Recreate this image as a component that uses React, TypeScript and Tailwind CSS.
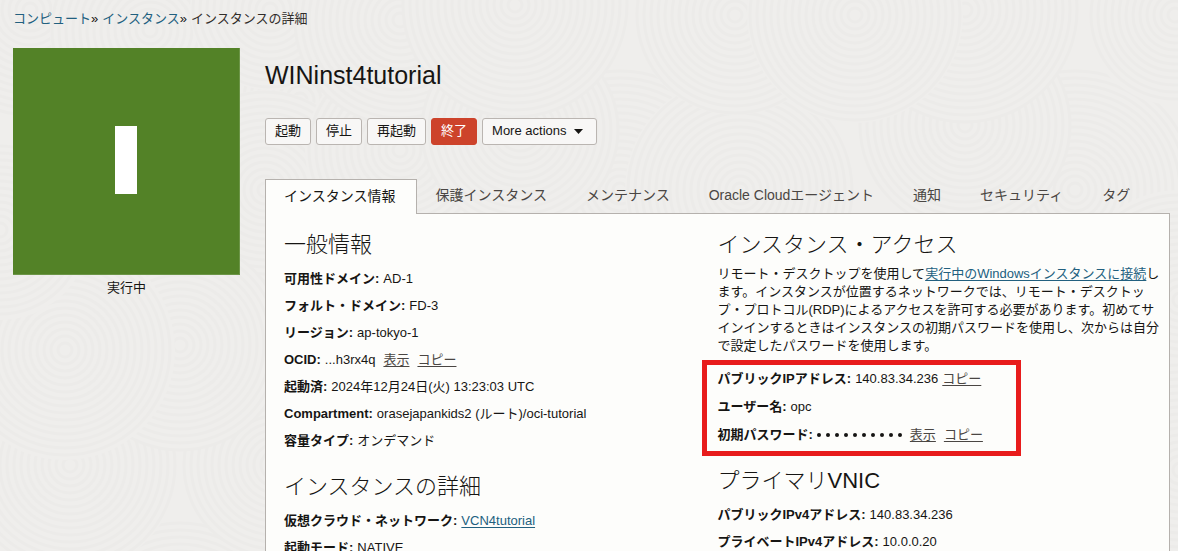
import React from "react";

type Disc = { x: number; y: number; r: number };

const DISCS: Disc[] = [
  { x: 30, y: 10, r: 110 }, { x: 150, y: 30, r: 100 }, { x: 300, y: 100, r: 110 },
  { x: 265, y: 190, r: 100 }, { x: 400, y: 150, r: 95 }, { x: 270, y: 10, r: 80 },
  { x: 400, y: 20, r: 105 }, { x: 620, y: 190, r: 125 }, { x: 740, y: 190, r: 115 },
  { x: 735, y: 15, r: 100 }, { x: 520, y: 130, r: 98 }, { x: 515, y: 5, r: 112 },
  { x: 1075, y: 190, r: 120 }, { x: 1175, y: 15, r: 90 },
  { x: 965, y: 125, r: 105 }, { x: 965, y: 10, r: 112 }, { x: 855, y: 15, r: 108 },
  { x: 1180, y: 300, r: 110 }, { x: 1180, y: 470, r: 110 },
  { x: 180, y: 635, r: 115 }, { x: 275, y: 465, r: 92 }, { x: 70, y: 465, r: 108 },
  { x: 180, y: 345, r: 105 }, { x: 65, y: 350, r: 110 }, { x: 0, y: 230, r: 90 },
];

function Backdrop() {
  return (
    <svg className="pointer-events-none absolute inset-0 h-full w-full" aria-hidden="true">
      {DISCS.map((d, i) => (
        <g key={i}>
          <circle cx={d.x} cy={d.y} r={d.r} fill="#efeeec" />
          {Array.from({ length: Math.floor(d.r / 7) }, (_, k) => (
            <circle key={k} cx={d.x} cy={d.y} r={(k + 1) * 7} fill="none" stroke="#ecebe9" strokeWidth="3" />
          ))}
        </g>
      ))}
    </svg>
  );
}

function ActionButton({ children, danger = false }: { children: React.ReactNode; danger?: boolean }) {
  return (
    <button
      type="button"
      className={
        danger
          ? "flex h-[27px] items-center rounded-[3px] border border-[#cd432b] bg-[#cd432b] px-[9px] pb-[2px] text-white"
          : "flex h-[27px] items-center rounded-[3px] border border-[#bab5b1] bg-[#f8f7f6] px-[9px] pb-[2px] text-[#161513]"
      }
    >
      {children}
    </button>
  );
}

function Row({ label, children }: { label: string; children: React.ReactNode }) {
  return (
    <div className="flex gap-1 whitespace-nowrap">
      <dt className="font-bold">{label}:</dt>
      <dd className="flex">{children}</dd>
    </div>
  );
}

function TextLink({ children, className = "" }: { children: React.ReactNode; className?: string }) {
  return (
    <a href="#" className={"text-[#4a4643] underline underline-offset-2 " + className}>
      {children}
    </a>
  );
}

function Heading({ children }: { children: React.ReactNode }) {
  return <h2 className="text-[22px] leading-8 font-light">{children}</h2>;
}

const TABS = ["インスタンス情報", "保護インスタンス", "メンテナンス", "Oracle Cloudエージェント", "通知", "セキュリティ", "タグ"];

export default function App() {
  return (
    <div className="relative h-screen overflow-hidden bg-[#efeeec] font-['Liberation_Sans','Noto_Sans_CJK_JP',sans-serif] text-[13px] text-[#161513]">
      <Backdrop />
      <div className="relative pr-2 pl-[13px]">
        <nav className="flex h-12 items-center gap-1 pb-[10px]" aria-label="パンくず">
          <span><a href="#" className="text-[#22607f]">コンピュート</a>»</span>
          <span><a href="#" className="text-[#22607f]">インスタンス</a>»</span>
          <span className="text-[#312d2a]">インスタンスの詳細</span>
        </nav>

        <div className="flex items-start gap-[25px]">
          <aside className="w-[227px] shrink-0 text-center">
            <div className="flex aspect-square items-center justify-center border-r border-b border-[#6c9547] bg-[#538227] pb-[2px]">
              <div className="h-[68px] w-[22px] bg-white" />
            </div>
            <p className="pt-1 leading-[18px]">実行中</p>
          </aside>

          <main className="min-w-0 flex-1">
            <h1 className="pt-3 text-[25px] leading-[30px]">WINinst4tutorial</h1>
            <div className="mt-7 flex gap-[5px]">
              <ActionButton>起動</ActionButton>
              <ActionButton>停止</ActionButton>
              <ActionButton>再起動</ActionButton>
              <ActionButton danger>終了</ActionButton>
              <ActionButton>
                More actions
                <svg className="mt-[2px] mr-1 ml-2 h-[5px] w-[9px]" viewBox="0 0 9 5" aria-hidden="true">
                  <path d="M0 0h9L4.500 5z" fill="#161513" />
                </svg>
              </ActionButton>
            </div>

            <div role="tablist" className="relative z-10 mt-[34px] -mb-px flex gap-[3px] text-sm whitespace-nowrap">
              {TABS.map((tab, i) => (
                <button
                  key={tab}
                  type="button"
                  role="tab"
                  aria-selected={i === 0}
                  className={
                    i === 0
                      ? "-mr-[3px] h-[35px] border border-b-0 border-[#b5b1ad] bg-[#fdfdfb] pr-[21px] pb-[2px] pl-[18px]"
                      : "h-[35px] px-[18px] pb-1 text-[#4a4643]"
                  }
                >
                  {tab}
                </button>
              ))}
            </div>

            <section className="grid grid-cols-2 border border-[#b5b1ad] bg-[#fdfdfb] px-[18px] pt-[15px]">
              <div>
                <Heading>一般情報</Heading>
                <dl className="mt-1 leading-[27px]">
                  <Row label="可用性ドメイン">AD-1</Row>
                  <Row label="フォルト・ドメイン">FD-3</Row>
                  <Row label="リージョン">ap-tokyo-1</Row>
                  <Row label="OCID">
                    ...h3rx4q
                    <TextLink className="ml-2">表示</TextLink>
                    <TextLink className="ml-2">コピー</TextLink>
                  </Row>
                  <Row label="起動済">2024年12月24日(火) 13:23:03 UTC</Row>
                  <Row label="Compartment">orasejapankids2 (ルート)/oci-tutorial</Row>
                  <Row label="容量タイプ">オンデマンド</Row>
                </dl>
                <div className="mt-[17px]">
                  <Heading>インスタンスの詳細</Heading>
                  <dl className="mt-1 leading-[27px]">
                    <Row label="仮想クラウド・ネットワーク">
                      <a href="#" className="text-[#22607f] underline underline-offset-2">VCN4tutorial</a>
                    </Row>
                    <Row label="起動モード">NATIVE</Row>
                  </dl>
                </div>
              </div>

              <div>
                <Heading>インスタンス・アクセス</Heading>
                <p className="mt-1 leading-[18px] whitespace-nowrap">
                  リモート・デスクトップを使用して
                  <a href="#" className="text-[#22607f] underline underline-offset-2">実行中のWindowsインスタンスに接続</a>し<br />
                  ます。インスタンスが位置するネットワークでは、リモート・デスクトッ<br />
                  プ・プロトコル(RDP)によるアクセスを許可する必要があります。初めてサ<br />
                  インインするときはインスタンスの初期パスワードを使用し、次からは自分<br />
                  で設定したパスワードを使用します。
                </p>
                <dl className="mt-[5px] -ml-4 w-[319px] border-[5px] border-[#e81c1c] pb-[2px] pl-[11px] leading-[28px]">
                  <Row label="パブリックIPアドレス">
                    140.83.34.236
                    <TextLink className="ml-1">コピー</TextLink>
                  </Row>
                  <Row label="ユーザー名">opc</Row>
                  <Row label="初期パスワード">
                    <span className="flex items-center gap-[5px]" role="img" aria-label="非表示のパスワード">
                      {Array.from({ length: 10 }, (_, i) => (
                        <span key={i} className="size-1 rounded-full bg-[#161513]" />
                      ))}
                    </span>
                    <TextLink className="ml-2">表示</TextLink>
                    <TextLink className="ml-2">コピー</TextLink>
                  </Row>
                </dl>
                <div className="mt-[9px]">
                  <Heading>プライマリVNIC</Heading>
                  <dl className="mt-1 leading-[27px]">
                    <Row label="パブリックIPv4アドレス">140.83.34.236</Row>
                    <Row label="プライベートIPv4アドレス">10.0.0.20</Row>
                  </dl>
                </div>
              </div>
            </section>
          </main>
        </div>
      </div>
    </div>
  );
}
